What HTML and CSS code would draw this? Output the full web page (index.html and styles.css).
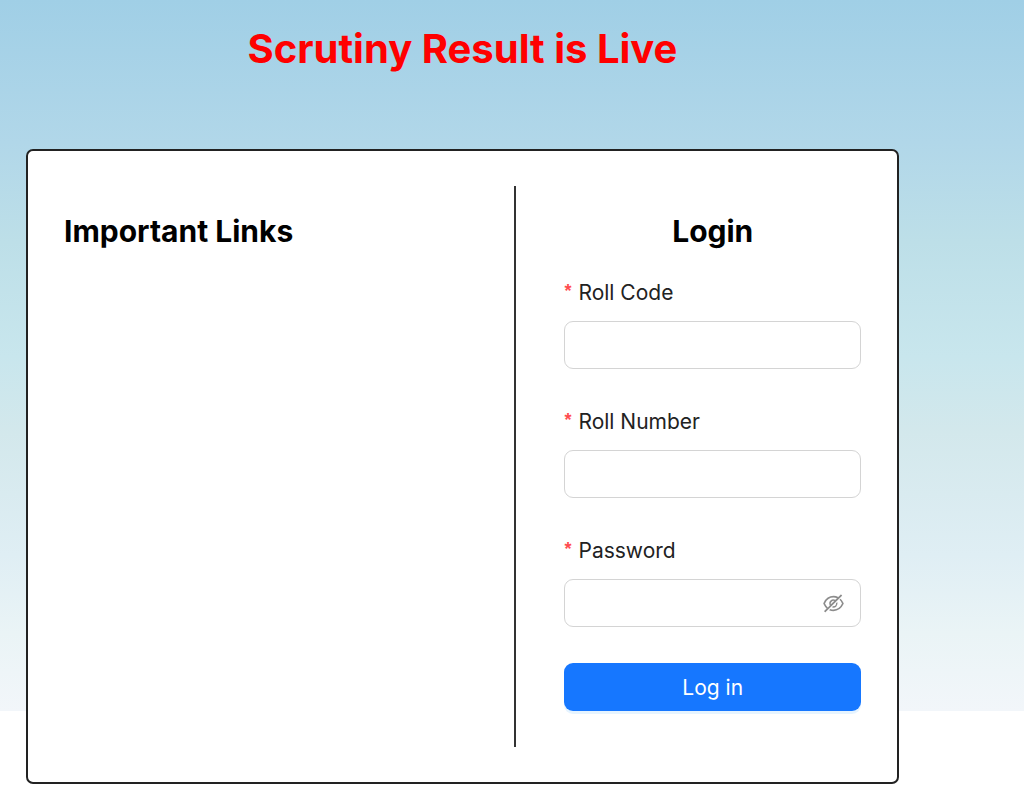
FILE: index.html
```html
<!DOCTYPE html>
<html lang="en">
<head>
    <meta charset="UTF-8">
    <meta name="viewport" content="width=device-width, initial-scale=1.0">
    <title>Scrutiny Result</title>
    <link rel="stylesheet" href="styles.css">
</head>
<body>
    <main class="page">
        <h1 class="page-title">Scrutiny Result is Live</h1>
        <div class="card">
            <section class="links">
                <h2 class="section-title">Important Links</h2>
            </section>
            <section class="login">
                <h2 class="section-title">Login</h2>
                <form id="loginForm">
                    <label class="field-label" for="rollCode">Roll Code</label>
                    <div class="field">
                        <input type="text" id="rollCode" name="rollCode" required>
                    </div>

                    <label class="field-label" for="rollNumber">Roll Number</label>
                    <div class="field">
                        <input type="text" id="rollNumber" name="rollNumber" required>
                    </div>

                    <label class="field-label" for="password">Password</label>
                    <div class="field">
                        <input type="password" id="password" name="password" required>
                        <button type="button" class="toggle-button" aria-label="Show password" onclick="togglePassword()">
                            <svg viewBox="64 64 896 896" fill="currentColor" aria-hidden="true">
                                <path d="M942.2 486.2Q889.47 375.11 816.7 305l-50.88 50.88C807.31 395.53 843.45 447.4 874.7 512 791.5 684.2 673.4 766 512 766q-72.67 0-133.87-22.38L323 798.75Q408 838 512 838q288.3 0 430.2-300.3a60.29 60.29 0 000-51.5zm-63.57-320.64L836 122.88a8 8 0 00-11.32 0L715.31 232.2Q624.86 186 512 186q-288.3 0-430.2 300.3a60.3 60.3 0 000 51.5q56.69 119.4 136.5 191.41L112.48 835a8 8 0 000 11.31L155.17 889a8 8 0 0011.31 0l712.15-712.12a8 8 0 000-11.32zM149.3 512C232.6 339.8 350.7 258 512 258c54.54 0 104.13 9.36 149.12 28.39l-70.3 70.3a176 176 0 00-238.13 238.13l-83.42 83.42C223.1 637.49 183.3 582.28 149.3 512zm246.7 0a112.11 112.11 0 01146.2-106.69L401.31 546.2A112 112 0 01396 512z"/>
                                <path d="M508 624c-3.46 0-6.87-.16-10.25-.47l-52.82 52.82a176.09 176.09 0 00227.42-227.42l-52.82 52.82c.31 3.38.47 6.79.47 10.25a111.94 111.94 0 01-112 112z"/>
                            </svg>
                        </button>
                    </div>

                    <button type="submit" class="login-button">Log in</button>
                </form>
            </section>
        </div>
    </main>

    <script>
        function togglePassword() {
            const input = document.getElementById('password');
            input.type = input.type === 'password' ? 'text' : 'password';
        }
    </script>
</body>
</html>
```
FILE: styles.css
```css
* {
    box-sizing: border-box;
}
body {
    font-family: Inter, "Liberation Sans", sans-serif;
    margin: 0;
    color: #000;
    background-color: #fff;
}
.page {
    padding: 21px 125px 12px 26px;
    background: linear-gradient(#a0cfe6, #b1d7e9 20%, #bddfe8 34%, #c8e6ed 50%, #d3e8ec 61%, #dfeef4 78%, #eaf4f6 89%, #f2f6fa) no-repeat;
    background-size: 100% 711px;
}
.page-title {
    margin: 0 0 72px;
    color: #f00;
    font-size: 40px;
    line-height: 56px;
    text-align: center;
}
.card {
    display: grid;
    grid-template-columns: minmax(0, 1.3fr) minmax(0, 1fr);
    padding: 35px 36px;
    background-color: #fff;
    border: 2px solid #222;
    border-radius: 7px;
}
.section-title {
    margin: 0 0 24px;
    font-size: 30px;
    line-height: 42px;
}
.links {
    padding-top: 24px;
}
.login {
    padding: 24px 0 36px 48px;
    border-left: 2px solid #333;
}
.login .section-title {
    text-align: center;
}
.field-label {
    display: flex;
    gap: 7px;
    margin-bottom: 12px;
    color: #222;
    font-size: 21px;
    line-height: 33px;
}
.field-label::before {
    content: "*";
    color: #ff4d4f;
    font-family: "Liberation Sans", sans-serif;
    font-size: 18px;
    font-weight: bold;
    line-height: 30px;
}
.field {
    display: flex;
    align-items: center;
    height: 48px;
    margin-bottom: 36px;
    padding: 0 16px;
    background-color: #fff;
    border: 1px solid #d4d4d4;
    border-radius: 9px;
}
.field:focus-within {
    border-color: #1677ff;
}
.field input {
    flex: 1;
    min-width: 0;
    padding: 0;
    border: none;
    outline: none;
    background: none;
    font-family: inherit;
    font-size: 21px;
}
.toggle-button {
    display: flex;
    padding: 0;
    border: none;
    background: none;
    color: #8c8c8c;
    cursor: pointer;
}
.toggle-button svg {
    width: 21px;
    height: 21px;
}
.login-button {
    display: block;
    width: 100%;
    height: 48px;
    border: none;
    border-radius: 9px;
    background-color: #1677ff;
    box-shadow: 0 3px 0 rgba(5, 145, 255, 0.1);
    color: #fff;
    font-family: inherit;
    font-size: 21px;
    cursor: pointer;
}
.login-button:hover {
    background-color: #4096ff;
}
```
